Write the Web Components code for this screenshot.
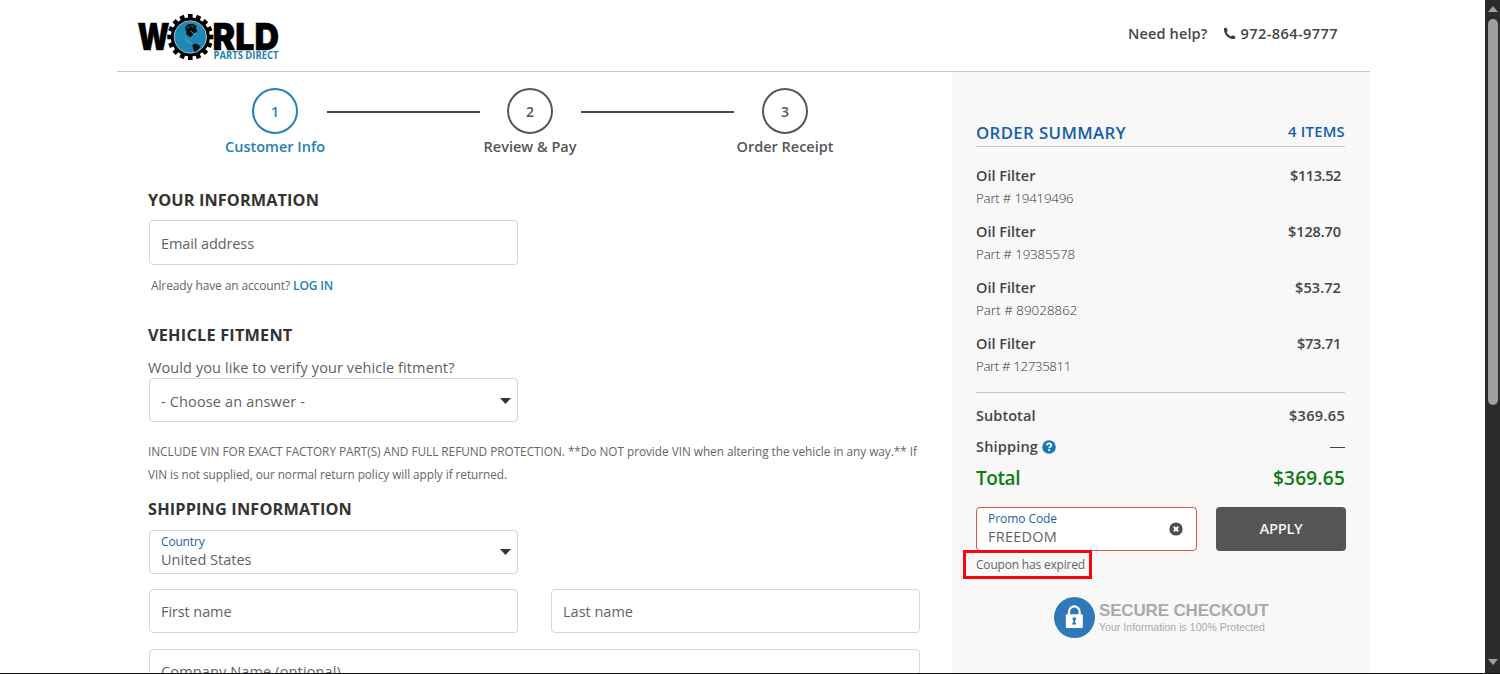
<!DOCTYPE html>
<html lang="en">
<head>
<meta charset="utf-8">
<title>Checkout - World Parts Direct</title>
<style>
  body {
    margin: 0;
    width: 1500px;
    height: 674px;
    overflow: hidden;
    background: #fff;
    font-family: "Open Sans", "Noto Sans", sans-serif;
    font-size: 14.500px;
    color: #5a5a5a;
  }
</style>
</head>
<body>
<checkout-page></checkout-page>

<script>
function define(name, template, setup) {
  customElements.define(name, class extends HTMLElement {
    constructor() {
      super();
      this._shadow = this.attachShadow({mode: "open"});
      this._shadow.innerHTML = typeof template === "function" ? template(this) : template;
      if (setup)
        setup(this);
    }
  });
}

const attr = (el, name, fallback = "") => el.getAttribute(name) || fallback;

define("world-logo", el => {
  let teeth = "";
  for (let i = 0; i < 16; i++)
    teeth += `<rect x="-2.3" y="-23" width="4.6" height="7" transform="rotate(${ i * 22.5 })"/>`;

  return `
    <style>
      :host { display: block; width: 144px; height: 50px; }
      svg { display: block; overflow: visible; font-family: Inter, "Open Sans", sans-serif; }
    </style>
    <svg width="144" height="50" viewBox="136 12 144 50">
      <text x="137.500" y="50" font-size="37" font-weight="900" textLength="32" lengthAdjust="spacingAndGlyphs" stroke="#000" stroke-width=".5">W</text>
      <text x="212.500" y="50" font-size="37" font-weight="900" textLength="66.500" lengthAdjust="spacingAndGlyphs" stroke="#000" stroke-width=".5">RLD</text>
      <g transform="translate(190.300 37)">
        ${ teeth }
        <circle r="19.500"/>
        <circle r="16.200" fill="#1f89b4" stroke="#b9d6e2" stroke-width=".8"/>
        <path d="M-5-10l3-3h5l3 2 0 3 1 2-2 2-2 0-1 3-2 1-2-1-2-2 0-3-1-2z" fill="#0a0f14"/>
        <path d="M2 8l3-1.500 3.500 1.500 1.500 2-3 3.500-3 1.500-1-3.500z" fill="#0a0f14"/>
        <path d="M-3-9l2-1M1-11l2 1M0-6l3 2M-5 1l3 4 4 2" fill="none" stroke="#87b9cb" stroke-width=".7"/>
      </g>
      <text x="213.500" y="59.300" font-size="9.800" font-weight="700" fill="#1b84ae" textLength="65" lengthAdjust="spacingAndGlyphs" font-family="Open Sans">PARTS DIRECT</text>
    </svg>`;
});

define("site-header", `
  <style>
    :host {
      display: flex;
      justify-content: space-between;
      box-sizing: border-box;
      height: 72px;
      padding: 12px 32px 0 19px;
      border-bottom: 1px solid #c6c6c6;
      color: #454545;
      font-weight: 600;
    }
    .help { display: flex; align-items: center; height: 43px; }
    svg { margin: 0 5px 0 15px; }
  </style>
  <world-logo></world-logo>
  <div class="help">
    <fit-text w="79.500">Need help?</fit-text>
    <svg width="13" height="13" viewBox="0 0 13 13"><path d="M1 1.200 3.400.5 4.800 3.900 3.600 5.100C4.300 6.900 6 8.600 7.900 9.400L9.100 8.200 12.500 9.600 11.800 12.100C5.600 12.500.5 7.400 1 1.200z" fill="#3c3c3c"/></svg>
    <fit-text w="97.500">972-864-9777</fit-text>
  </div>`);

define("checkout-step", el => `
  <style>
    :host {
      display: flex;
      flex-direction: column;
      align-items: center;
      width: 102px;
      color: #55565a;
      font-weight: 600;
    }
    :host([active]) { color: #2580b5; }
    .circle {
      display: flex;
      align-items: center;
      justify-content: center;
      box-sizing: border-box;
      width: 46px;
      height: 46px;
      border: 2px solid;
      border-radius: 50%;
      font-size: 14px;
    }
    .label { line-height: 26px; }
  </style>
  <div class="circle">${ attr(el, "number") }</div>
  <div class="label"><slot></slot></div>`);

define("checkout-steps", `
  <style>
    :host { display: flex; padding-left: 107px; height: 118px; box-sizing: border-box; padding-top: 16px; }
    i { width: 153px; height: 2px; margin: 23px -1px 0 1px; background: #4b4b4f; }
    i + checkout-step + i { margin: 23px 0; }
  </style>
  <checkout-step number="1" active><fit-text w="100">Customer Info</fit-text></checkout-step>
  <i></i>
  <checkout-step number="2"><fit-text w="93">Review &amp; Pay</fit-text></checkout-step>
  <i></i>
  <checkout-step number="3"><fit-text w="97">Order Receipt</fit-text></checkout-step>`);

define("form-field", el => `
  <style>
    :host {
      display: flex;
      align-items: center;
      justify-content: space-between;
      box-sizing: border-box;
      width: 369px;
      height: 44px;
      padding: 2px 6px 0 11px;
      border: 1px solid #d5d5d5;
      border-radius: 4px;
      background: #fff;
      color: #636363;
    }
    .text { line-height: 18px; }
    .label { margin-top: -3px; font-size: 12px; color: #1b62a8; }
    .caret { margin-top: -1px; }
  </style>
  <div class="text">
    ${ el.hasAttribute("label") ? `<div class="label"><fit-text w="${ attr(el, "label-w") }">${ attr(el, "label") }</fit-text></div>` : "" }
    <slot></slot>
  </div>
  ${ el.hasAttribute("select") ? '<svg class="caret" width="11" height="6"><path d="M0 0h11L5.500 6z" fill="#333"/></svg>' : "" }
  <slot name="icon"></slot>`);

define("customer-form", `
  <style>
    :host { display: block; width: 772px; padding-left: 31px; }
    h2 { margin: 0; font-size: 16.300px; line-height: 20px; color: #333; }
    form-field { margin-left: 1px; }
    .hint { padding: 11px 0 0 3px; font-size: 12px; line-height: 20px; color: #666; }
    .hint b { font-weight: 600; color: #2580b5; margin-left: 3px; }
    .question { line-height: 20px; padding-top: 13px; color: #5f5f5f; }
    .note { padding-top: 18px; font-size: 11.800px; line-height: 23px; color: #666; }
    .row { display: flex; gap: 32px; margin-top: 16px; }
    .row form-field { height: 44px; padding-top: 1px; }
  </style>
  <h2><fit-text w="171">YOUR INFORMATION</fit-text></h2>
  <form-field style="margin-top:10px;height:45px"><fit-text w="93">Email address</fit-text></form-field>
  <div class="hint"><fit-text w="139">Already have an account?</fit-text><b><fit-text w="40">LOG IN</fit-text></b></div>

  <h2 style="margin-top:29px"><fit-text w="144.500">VEHICLE FITMENT</fit-text></h2>
  <div class="question"><fit-text w="306.500">Would you like to verify your vehicle fitment?</fit-text></div>
  <form-field select style="margin-top:0;padding-top:3px"><fit-text w="144">- Choose an answer -</fit-text></form-field>
  <div class="note">
    <fit-text w="769">INCLUDE VIN FOR EXACT FACTORY PART(S) AND FULL REFUND PROTECTION. **Do NOT provide VIN when altering the vehicle in any way.** If</fit-text><br>
    <fit-text w="359">VIN is not supplied, our normal return policy will apply if returned.</fit-text>
  </div>

  <h2 style="margin-top:13px"><fit-text w="204">SHIPPING INFORMATION</fit-text></h2>
  <form-field select label="Country" label-w="43.500" style="margin-top:11px;padding-top:1px"><fit-text w="90.500">United States</fit-text></form-field>
  <div class="row" style="margin-top:15px">
    <form-field><fit-text w="70.500">First name</fit-text></form-field>
    <form-field><fit-text w="70">Last name</fit-text></form-field>
  </div>
  <div class="row"><form-field style="width:771px"><fit-text w="180">Company Name (optional)</fit-text></form-field></div>`);

define("order-item", el => `
  <style>
    :host { display: block; height: 56px; padding-right: 4px; }
    .top { display: flex; justify-content: space-between; line-height: 22px; font-weight: 600; color: #454545; }
    .part { line-height: 22px; font-size: 13.300px; font-weight: 300; color: #333; }
  </style>
  <div class="top"><fit-text w="59.500">Oil Filter</fit-text><fit-text w="${ attr(el, "price-w") }">${ attr(el, "price") }</fit-text></div>
  <div class="part"><fit-text w="${ attr(el, "part-w") }">Part # ${ attr(el, "part") }</fit-text></div>`);

define("secure-badge", `
  <style>
    :host { display: flex; gap: 4px; font-family: "Liberation Sans", Arial, sans-serif; color: #aaa; }
    svg { display: block; }
    .title { font-size: 17px; font-weight: bold; line-height: 20px; padding-top: 4px; }
    .sub { font-size: 10.500px; line-height: 12px; }
  </style>
  <svg width="41" height="41" viewBox="0 0 41 41">
    <circle cx="20.500" cy="20.500" r="20.500" fill="#3079b8"/>
    <path d="M15 18v-3.300a5.300 5.300 0 0 1 10.600 0V18" fill="none" stroke="#fff" stroke-width="2.200"/>
    <rect x="11.800" y="17.200" width="17" height="13.800" rx="1" fill="#fff"/>
    <path d="M18.700 20.500h3.200v2.500h-.7v3h1v1.500h-4V26h1v-3h-.7z" fill="#3079b8"/>
  </svg>
  <div>
    <div class="title"><fit-text w="169.500">SECURE CHECKOUT</fit-text></div>
    <div class="sub"><fit-text w="166">Your Information is 100% Protected</fit-text></div>
  </div>`);

define("order-summary", `
  <style>
    :host { display: block; box-sizing: border-box; width: 418px; height: 602px; padding: 48px 25px 0 24px; background: #f8f8f8; }
    .row { display: flex; justify-content: space-between; align-items: center; color: #454545; font-weight: 600; }
    .head { height: 26px; padding-bottom: 2px; box-sizing: content-box; height: 24px; border-bottom: 1px solid #c6c6c6; color: #1560a8; font-size: 16.800px; }
    .head .count { font-size: 14.800px; margin-top: -3px; }
    .items { height: 227px; padding-top: 18px; border-bottom: 1px solid #c6c6c6; }
    .totals { padding-top: 7px; }
    .totals .row { height: 31px; }
    .ship { display: flex; align-items: center; gap: 4px; }
    .dash { width: 15px; height: 1px; margin-top: 2px; background: #454545; }
    .totals .total { color: #0b7d12; font-size: 19px; }
    .promo { display: flex; gap: 19px; margin: 14px -1px 0 0; }
    .promo form-field { width: 221px; border-color: #d9534f; padding: 1px 13px 0 11px; }
    .promo svg { margin-top: -2px; }
    button {
      width: 130px;
      height: 44px;
      padding: 0 0 2px;
      border: 0;
      border-radius: 4px;
      background: #555;
      color: #f1f1f1;
      font: 600 14.800px "Open Sans", sans-serif;
    }
    .error { position: relative; font-size: 12px; line-height: 18px; padding-top: 5px; height: 41px; color: #666; }
    .mark { position: absolute; left: -13px; top: -1px; box-sizing: border-box; width: 129px; height: 29px; border: 3px solid #f8060c; }
    secure-badge { margin-left: 78px; }
  </style>
  <div class="row head"><fit-text w="150">ORDER SUMMARY</fit-text><fit-text class="count" w="57">4 ITEMS</fit-text></div>
  <div class="items">
    <order-item part="19419496" part-w="97.500" price="$113.52" price-w="51"></order-item>
    <order-item part="19385578" part-w="99" price="$128.70" price-w="53"></order-item>
    <order-item part="89028862" part-w="101.500" price="$53.72" price-w="46"></order-item>
    <order-item part="12735811" part-w="95" price="$73.71" price-w="44"></order-item>
  </div>
  <div class="totals">
    <div class="row"><fit-text w="59.500">Subtotal</fit-text><fit-text w="56">$369.65</fit-text></div>
    <div class="row">
      <div class="ship">
        <fit-text w="62">Shipping</fit-text>
        <svg width="14" height="14" viewBox="0 0 14 14"><circle cx="7" cy="7" r="6.800" fill="#1878b4"/><path d="M4.800 5.400C5 3.900 6 3.300 7.100 3.300c1.300 0 2.200.8 2.200 1.900C9.300 6.700 7.200 6.700 7.200 8.300" fill="none" stroke="#fff" stroke-width="1.700"/><rect x="6.200" y="9.300" width="1.900" height="1.800" fill="#fff"/></svg>
      </div>
      <div class="dash"></div>
    </div>
    <div class="row total"><fit-text w="44">Total</fit-text><fit-text w="72">$369.65</fit-text></div>
  </div>
  <div class="promo">
    <form-field label="Promo Code" label-w="69">
      <fit-text w="69">FREEDOM</fit-text>
      <svg slot="icon" width="14" height="14" viewBox="0 0 14 14"><circle cx="7" cy="7" r="6.600" fill="#4a4f4f"/><path d="M4.800 4.800l4.400 4.400M9.200 4.800 4.800 9.200" stroke="#fff" stroke-width="2"/></svg>
    </form-field>
    <button><fit-text w="43">APPLY</fit-text></button>
  </div>
  <div class="error"><fit-text w="109">Coupon has expired</fit-text><div class="mark"></div></div>
  <secure-badge></secure-badge>`);

define("window-scrollbar", `
  <style>
    :host {
      display: flex;
      flex-direction: column;
      align-items: center;
      box-sizing: border-box;
      width: 15px;
      height: 673px;
      padding: 6px 0 8px 1px;
      background: #2b2b2b;
    }
    svg { display: block; }
    .thumb { width: 10px; height: 386px; margin: 7px 0 auto; border-radius: 5px; background: #9f9f9f; }
  </style>
  <svg width="10" height="6"><path d="M0 6h10L5 0z" fill="#a0a0a0"/></svg>
  <div class="thumb"></div>
  <svg width="10" height="6"><path d="M0 0h10L5 6z" fill="#a0a0a0"/></svg>`);

define("checkout-page", `
  <style>
    :host { display: flex; box-sizing: border-box; width: 1500px; height: 674px; overflow: hidden; border-bottom: 1px solid #111; }
    .page { width: 1253px; margin: 0 115px 0 117px; flex: none; }
    .columns { display: flex; }
    .main { width: 835px; flex: none; }
  </style>
  <div class="page">
    <site-header></site-header>
    <div class="columns">
      <div class="main">
        <checkout-steps></checkout-steps>
        <customer-form></customer-form>
      </div>
      <order-summary></order-summary>
    </div>
  </div>
  <window-scrollbar></window-scrollbar>`);

// Single line of text, tracked so that it spans exactly "w" pixels.
define("fit-text", `
  <style>
    :host { display: inline-block; white-space: nowrap; vertical-align: top; text-align: left; }
    span { display: inline-block; vertical-align: top; }
  </style>
  <span><slot></slot></span>`);

function fitAll(root) {
  root.querySelectorAll("*").forEach(el => {
    if (el.localName === "fit-text") {
      const width = Number(el.getAttribute("w"));
      const natural = el.shadowRoot.querySelector("span").getBoundingClientRect().width;
      el.style.letterSpacing = (width - natural) / el.textContent.length + "px";
      el.style.width = width + "px";
    }
    if (el.shadowRoot)
      fitAll(el.shadowRoot);
  });
}

fitAll(document);
</script>
</body>
</html>
